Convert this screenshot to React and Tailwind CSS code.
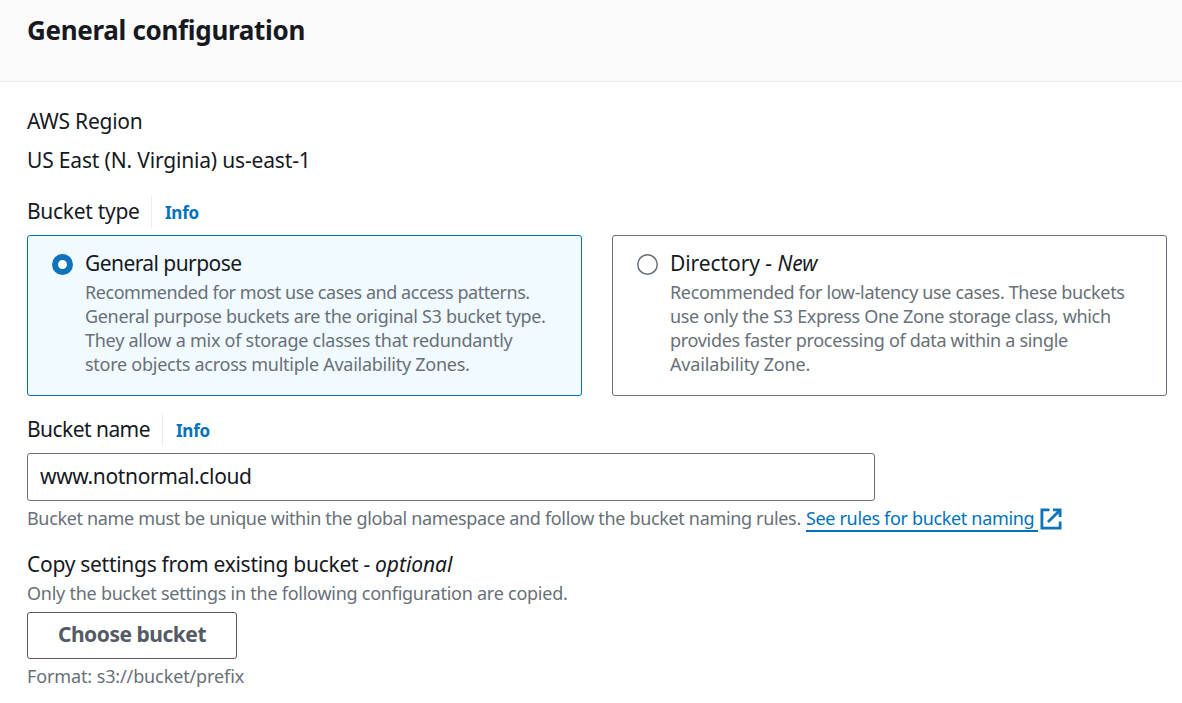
function Heading({ children }) {
  return (
    <header className="h-[82px] border-b border-[#eaeded] bg-[#fafafa] pt-3 pl-[27px]">
      <h2 className="text-[26px] leading-9 font-bold tracking-[-0.31px]">{children}</h2>
    </header>
  );
}

function LabelWithInfo({ children, className }) {
  return (
    <div className="flex h-8 items-start">
      <span className={"text-[21px] leading-[30px] " + className}>{children}</span>
      <a className="h-8 border-l border-[#eaeded] pt-[5px] pl-[13px] text-[17px] leading-6 font-bold tracking-[-0.25px] text-[#0073bb]">Info</a>
    </div>
  );
}

function Radio({ checked }) {
  return (
    <svg className="mt-1.5 size-[21px] shrink-0" viewBox="0 0 21 21" fill="none">
      {checked ? (
        <circle cx="10.5" cy="10.5" r="7.5" fill="#fff" stroke="#0f73bb" strokeWidth="6" />
      ) : (
        <circle cx="10.5" cy="10.5" r="9.75" fill="#fff" stroke="#687078" strokeWidth="1.5" />
      )}
    </svg>
  );
}

function Tile({ checked, label, lines }) {
  return (
    <div
      className={
        "flex h-[161px] w-[555px] gap-3 rounded-[3px] border pt-3 pl-6 " +
        (checked ? "border-[#0073bb] bg-[#f1faff]" : "border-[#687078] bg-white")
      }
    >
      <Radio checked={checked} />
      <div>
        <div className="text-[21px] leading-[30px] whitespace-nowrap">{label}</div>
        <div className="mt-0.5 text-[18px] leading-6 whitespace-nowrap text-[#687078]">
          {lines.map((l) => (
            <div key={l.text} className="flex">
              <span className={l.className}>{l.text}</span>
            </div>
          ))}
        </div>
      </div>
    </div>
  );
}

const general = [
  { text: "Recommended for most use cases and access patterns.", className: "tracking-[-0.45px]" },
  { text: "General purpose buckets are the original S3 bucket type.", className: "tracking-[-0.32px]" },
  { text: "They allow a mix of storage classes that redundantly", className: "tracking-[-0.26px]" },
  { text: "store objects across multiple Availability Zones.", className: "tracking-[-0.26px]" },
];

const directory = [
  { text: "Recommended for low-latency use cases. These buckets", className: "tracking-[-0.35px]" },
  { text: "use only the S3 Express One Zone storage class, which", className: "tracking-[-0.33px]" },
  { text: "provides faster processing of data within a single", className: "tracking-[-0.31px]" },
  { text: "Availability Zone.", className: "tracking-[-0.14px]" },
];

export default function App() {
  return (
    <div className="h-[703px] w-[1182px] overflow-hidden bg-white font-['Noto_Sans',sans-serif] text-[#16191f]">
      <Heading>General configuration</Heading>
      <main className="flex flex-col items-start pt-6 pl-[27px] whitespace-nowrap">
        <div className="text-[21px] leading-[30px] tracking-[-0.25px]">AWS Region</div>
        <div className="mt-[9px] text-[21px] leading-[30px] tracking-[-0.17px]">US East (N. Virginia) us-east-1</div>
        <div className="mt-[21px]">
          <LabelWithInfo className="w-[124px] tracking-[-0.3px]">Bucket type</LabelWithInfo>
        </div>
        <div className="mt-[7px] flex gap-[30px]">
          <Tile checked label={<span className="tracking-[-0.57px]">General purpose</span>} lines={general} />
          <Tile label={<span className="tracking-[-0.07px]">Directory - <em>New</em></span>} lines={directory} />
        </div>
        <div className="mt-[18px]">
          <LabelWithInfo className="w-[135px] tracking-[-0.55px]">Bucket name</LabelWithInfo>
        </div>
        <div className="mt-[7px] h-12 w-[848px] rounded-[3px] border border-[#687078] pt-[7px] pl-3 text-[21px] leading-[30px]">
          <span className="tracking-[-0.36px]">www.notnormal.cloud</span>
        </div>
        <div className="mt-[5px] flex h-6 text-[18px] leading-6 text-[#687078]">
          <span className="w-[779px] tracking-[-0.335px]">Bucket name must be unique within the global namespace and follow the bucket naming rules.</span>
          <a className="h-[26px] w-[232px] border-b-2 border-[#0073bb] tracking-[-0.34px] text-[#0073bb]">See rules for bucket naming</a>
          <svg className="mt-0.5 ml-0.5 size-[22px]" viewBox="0 0 22 22" fill="none" stroke="#0f73bb" strokeWidth="2.8">
            <path d="M9.5 1.9H1.9v18.2h18.2V13.5" />
            <path d="M13 1.9h7.1V9M20.1 1.9 8 14" />
          </svg>
        </div>
        <div className="mt-[19px] text-[21px] leading-[30px]">
          <span className="tracking-[-0.28px]">Copy settings from existing bucket - </span>
          <em className="tracking-[-0.06px]">optional</em>
        </div>
        <div className="mt-0.5 text-[18px] leading-6 tracking-[-0.25px] text-[#687078]">
          Only the bucket settings in the following configuration are copied.
        </div>
        <button className="mt-[7px] flex h-[47px] w-[210px] justify-center rounded-[3px] border border-[#545b64] pt-[7px] text-[21px] leading-[29px] font-bold tracking-[-0.48px] text-[#545b64]">
          Choose bucket
        </button>
        <div className="mt-[5px] text-[18px] leading-6 tracking-[-0.12px] text-[#687078]">Format: s3://bucket/prefix</div>
      </main>
    </div>
  );
}
